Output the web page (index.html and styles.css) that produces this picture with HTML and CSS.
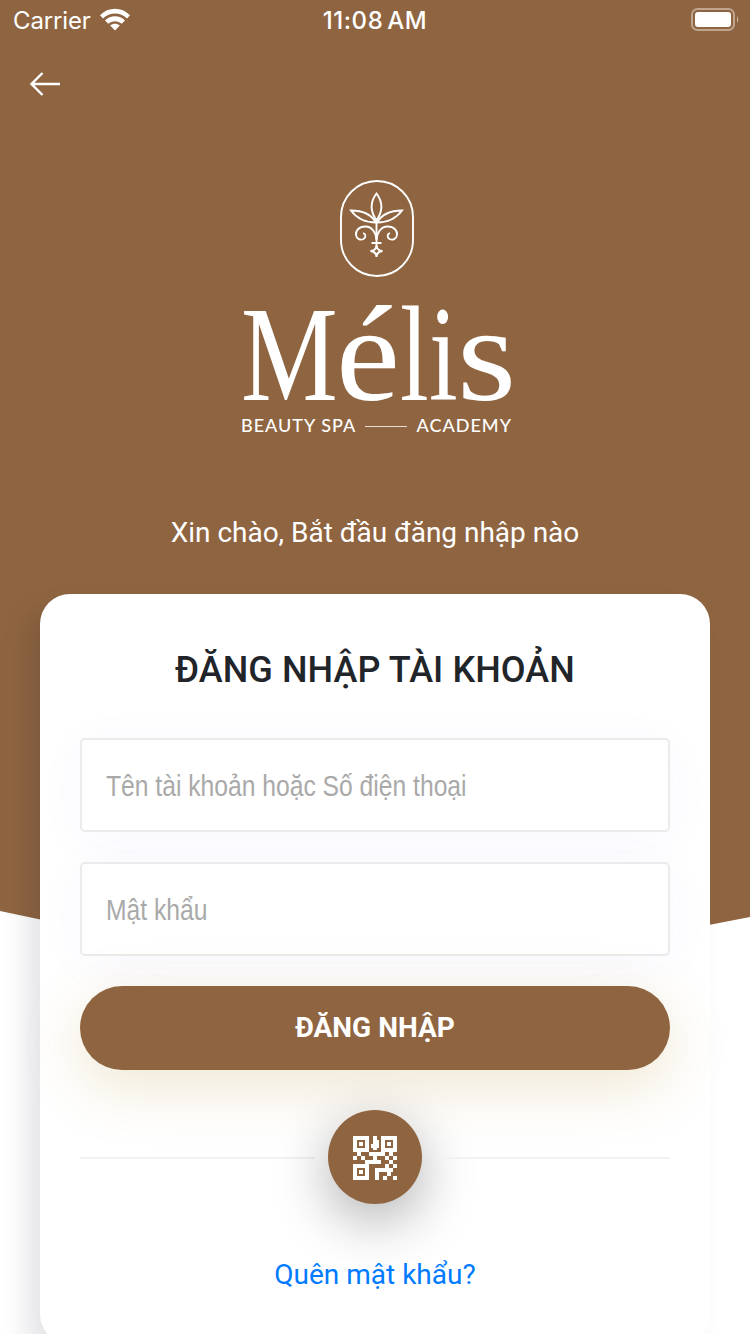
FILE: index.html
```html
<!DOCTYPE html>
<html lang="vi">
<head>
<meta charset="utf-8">
<title>Mélis</title>
<link rel="stylesheet" href="styles.css">
</head>
<body>
<div class="screen">
  <header class="status">
    <div class="carrier"><span>Carrier</span>
      <svg width="30" height="23" viewBox="0 0 30 23"><path d="M0 7.2C8.2-1.4 21.8-1.4 30 7.2L27 10.6C20.2 3.8 9.8 3.8 3 10.6Z"/><path d="M5 12.4C10.5 6.9 19.5 6.9 25 12.4L21.7 15.8C18 12.3 12 12.3 8.3 15.8Z"/><path d="M10.2 17.6C13 15.1 17 15.1 19.8 17.6L15 22.5Z"/></svg>
    </div>
    <div class="clock">11:08 AM</div>
    <svg class="battery" width="50" height="24" viewBox="0 0 50 24"><rect x="1" y="1" width="42" height="21" rx="5.5" fill="none" stroke="#fff" stroke-opacity=".42" stroke-width="2"/><rect x="4" y="4" width="36" height="15" rx="3"/><path d="M46 8Q48.5 11.500 46 15Z" fill-opacity=".5"/></svg>
  </header>
  <nav class="nav"><svg width="32" height="26" viewBox="0 0 32 26"><path d="M31 13H2.500M13.500 2L2.500 13L13.500 24" fill="none" stroke="#fff" stroke-width="2.400"/></svg></nav>
  <div class="brand">
    <svg class="emblem" width="76" height="98" viewBox="0 0 76 98">
      <rect x="2" y="2" width="72" height="95" rx="36"/>
      <g transform="translate(-.5 0)">
      <path d="M38 14.500C31.500 23 31.500 32 38 41.500C44.500 32 44.500 23 38 14.500Z"/>
      <path d="M37.500 43.500C33 36 24 31.500 12.500 31.500C18 39 26 43.500 37.500 43.500ZM38.500 43.500C43 36 52 31.500 63.500 31.500C58 39 50 43.500 38.500 43.500Z"/>
      <path d="M38 42V68M33 64H43"/>
      <path d="M38 61C37.500 53 33 47.500 27 47.500C20 47.500 17 52 17.500 56C18 60 22 61.500 25 60C28 58 27 54 24.500 54.500M38 61C38.500 53 43 47.500 49 47.500C56 47.500 59 52 58.500 56C58 60 54 61.500 51 60C48 58 49 54 51.500 54.500"/>
      <path d="M38 66.500Q38.500 71.500 44 72Q38.500 72.500 38 78Q37.500 72.500 32 72Q37.500 71.500 38 66.500Z"/><path class="gem" d="M38 69L41 72L38 75L35 72Z"/>
      </g>
    </svg>
    <div class="word"><span class="g g-m">M</span><span class="g g-e">é</span><span class="g g-l">l</span><span class="g g-i">i</span><span class="g g-s">s</span></div>
    <div class="tag"><span class="tag-a">BEAUTY SPA</span><i></i><span class="tag-b">ACADEMY</span></div>
  </div>
  <p class="hello">Xin chào, Bắt đầu đăng nhập nào</p>
  <main class="card">
    <h1>ĐĂNG NHẬP TÀI KHOẢN</h1>
    <div class="field"><span>Tên tài khoản hoặc Số điện thoại</span></div>
    <div class="field"><span>Mật khẩu</span></div>
    <button class="login">ĐĂNG NHẬP</button>
    <div class="divider"><i></i>
      <div class="qr"><svg width="44" height="44" viewBox="0 0 22 22" shape-rendering="crispEdges"><path fill-rule="evenodd" d="M0 0h8v8h-8zM2 2v4h4v-4zM3 3h2v2h-2zM14 0h8v8h-8zM16 2v4h4v-4zM17 3h2v2h-2zM0 14h8v8h-8zM2 16v4h4v-4zM3 17h2v2h-2z"/><path d="M10 0h2v2h1v4h-1v1h-2v-1h-1v-2h1zM2 8h2v2h-2zM0 10h2v2h-2zM4 10h2v2h-2zM8 8h8v2h-4v2h2v2h-8v-2h4v-2h-2zM18 8h2v2h-2zM16 10h2v2h-2zM20 10h2v2h-2zM18 12h2v2h-2zM16 14h2v2h-2zM20 14h2v2h-2zM11 16h9v2h-1v2h-2v-2h-4v4h-2zM15 20h2v2h-2zM20 20h2v2h-2z"/></svg></div>
    <i></i></div>
    <a class="forgot">Quên mật khẩu?</a>
  </main>
</div>
</body>
</html>
```
FILE: styles.css
```css
* { box-sizing: border-box; }
body { margin: 0; background: #fff; font-family: Roboto, sans-serif; color: #fff; overflow: hidden; }
svg { display: block; flex: none; fill: #fff; }
.screen { width: 750px; height: 1334px; overflow: hidden; position: relative; z-index: 0; }
.screen::before { content: ""; position: absolute; inset: 0; z-index: -1; background: #8f6541; clip-path: polygon(0 0, 100% 0, 100% 917px, 375px 990px, 0 911px); }
.status { height: 40px; display: grid; grid-template-columns: 1fr auto 1fr; grid-template-rows: 39px; align-items: center; padding: 0 9px 0 13px; font: 400 24px/38px Inter, sans-serif; }
.carrier { display: flex; align-items: center; gap: 9px; letter-spacing: -.15px; }
.carrier span, .clock { padding-top: 3px; }
.clock { font-weight: 500; letter-spacing: .55px; word-spacing: -3px; margin-right: 4px; }
.battery { justify-self: end; }
.nav { height: 88px; padding: 31px 0 0 29px; }
.brand { margin-top: 51px; height: 257px; display: flex; flex-direction: column; align-items: center; }
.emblem { margin-left: 3px; fill: none; stroke: #fff; stroke-width: 1.9; }
.emblem .gem { fill: #8f6541; stroke-width: 1.2; }
.word { flex: none; width: 272px; height: 110px; margin: 22px 0 0 3px; display: flex; font: 136px/110px "Liberation Serif", serif; }
.g { transform-origin: 0 0; white-space: nowrap; }
.g-m { width: 95px; transform: scaleX(.8); }
.g-e { width: 64px; transform: scaleX(1.06); }
.g-l { width: 29px; transform: scaleX(.76); }
.g-i { width: 28px; transform: scaleX(.76); }
.g-s { transform: scaleX(1.12); }
.tag { width: 270px; margin: 5px 0 0 2px; display: flex; align-items: center; justify-content: space-between; font: 500 18px/22px Lato, sans-serif; letter-spacing: 1px; white-space: nowrap; }
.tag span { margin-right: -1px; }
.tag i { width: 42px; height: 1px; margin-top: 2px; background: #e8ddd4; }
.hello { margin: 79px 0 0; font-size: 28px; line-height: 36px; text-align: center; letter-spacing: -.02px; }
.card { margin: 43px 40px 0; height: 750px; padding: 54px 40px 0; border-radius: 30px; background: #fff; color: #212529; box-shadow: -15px 15px 26px rgba(0, 9, 41, .1); display: flex; flex-direction: column; }
h1 { margin: 0 0 46px; font-size: 36px; line-height: 44px; font-weight: 500; text-align: center; letter-spacing: .08px; }
.field { height: 94px; margin-bottom: 30px; border: 2px solid #ebebeb; border-radius: 5px; padding: 2px 24px 0; display: flex; align-items: center; background: #fff; box-shadow: 0 8px 50px rgba(80, 60, 220, .04); color: #a9a9a9; font: 30px/40px "Liberation Sans", sans-serif; white-space: nowrap; }
.field span { transform: scaleX(.822); transform-origin: 0 50%; }
.login { height: 84px; border: 0; border-radius: 42px; background: #8f6541; color: #fff; font: 700 28px/40px Roboto, sans-serif; box-shadow: 0 16px 60px rgba(180, 140, 40, .22); }
.divider { display: flex; align-items: center; justify-content: space-between; margin-top: 40px; }
.divider i { width: 235px; height: 2px; margin-top: 2px; background: #f2f2f2; }
.qr { width: 94px; height: 94px; padding-top: 2px; border-radius: 50%; background: #8f6541; display: grid; place-items: center; box-shadow: 0 16px 56px rgba(0, 0, 0, .32); }
.forgot { margin-top: 53px; text-align: center; font-size: 28px; line-height: 36px; color: #007bff; }
```
